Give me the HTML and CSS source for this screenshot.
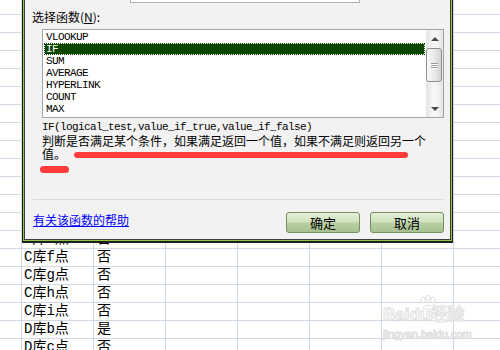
FILE: index.html
```html
<!DOCTYPE html>
<html lang="zh-CN">
  <head>
    <meta charset="UTF-8" />
    <meta name="viewport" content="width=device-width, initial-scale=1.0" />
    <title>插入函数</title>
    <link rel="stylesheet" href="styles.css">
  </head>

  <body>
    <div class="sheet">
      <div class="rows">
        <div class="row"><span class="cell name">C库e点</span><span class="cell flag">否</span></div>
        <div class="row"><span class="cell name">C库f点</span><span class="cell flag">否</span></div>
        <div class="row"><span class="cell name">C库g点</span><span class="cell flag">否</span></div>
        <div class="row"><span class="cell name">C库h点</span><span class="cell flag">否</span></div>
        <div class="row"><span class="cell name">C库i点</span><span class="cell flag">否</span></div>
        <div class="row"><span class="cell name">D库b点</span><span class="cell flag">是</span></div>
        <div class="row"><span class="cell name">D库c点</span><span class="cell flag">否</span></div>
      </div>

      <div class="watermark">
        <svg class="paw" width="20" height="16" viewBox="0 0 20 16">
          <ellipse cx="5" cy="5" rx="2.2" ry="2.8" />
          <ellipse cx="10" cy="3" rx="2.2" ry="2.8" />
          <ellipse cx="15" cy="5" rx="2.2" ry="2.8" />
          <path d="M5 14 C5 9 15 9 15 14 Z" />
        </svg>
        <div class="brand">Baidu经验</div>
        <div class="site">jingyan.baidu.com</div>
      </div>
    </div>

    <div class="dialog">
      <div class="name-box"></div>
      <label class="pick-label">选择函数(<u>N</u>):</label>

      <div class="list-box">
        <ul class="fn-list">
          <li>VLOOKUP</li>
          <li class="selected">IF</li>
          <li>SUM</li>
          <li>AVERAGE</li>
          <li>HYPERLINK</li>
          <li>COUNT</li>
          <li>MAX</li>
        </ul>
        <div class="scrollbar">
          <span class="arrow up"></span>
          <span class="thumb"><i></i><i></i><i></i></span>
          <span class="arrow down"></span>
        </div>
      </div>

      <p class="signature">IF(logical_test,value_if_true,value_if_false)</p>
      <p class="desc">判断是否满足某个条件，如果满足返回一个值，如果不满足则返回另一个值。</p>

      <!-- 红色标注 -->
      <span class="mark mark-long"></span>
      <span class="mark mark-short"></span>

      <div class="separator"></div>

      <div class="footer">
        <a href="#" class="help">有关该函数的帮助</a>
        <div class="buttons">
          <button>确定</button>
          <button>取消</button>
        </div>
      </div>
    </div>
  </body>
</html>
```

FILE: styles.css
```css
/* General Reset */
body {
  margin: 0;
  width: 500px;
  height: 350px;
  overflow: hidden;
  position: relative;
  font-family: "Noto Sans CJK SC", sans-serif;
}

/* Spreadsheet behind the dialog */
.sheet {
  position: relative;
  height: 350px;
  background-color: #fff;
  background-image: linear-gradient(to bottom, transparent 17px, #d0d7e5 17px),
    linear-gradient(to right, transparent 71px, #d0d7e5 71px);
  background-size: 100% 18px, 72px 100%;
  background-position: 0 -3px, -50px 0;
}

.rows {
  padding-top: 231px;
}

.row {
  display: grid;
  grid-template-columns: 22px 72px 72px;
  height: 18px;
  line-height: 17px;
  font-size: 14px;
  font-family: "Liberation Mono", "Noto Sans CJK SC", monospace;
  color: #000;
}

.cell.name {
  grid-column: 2;
  padding-left: 2px;
}

.cell.flag {
  padding-left: 3px;
}

/* Watermark */
.watermark {
  position: absolute;
  left: 383px;
  top: 295px;
  width: 100px;
  white-space: nowrap;
  color: #fff;
  -webkit-text-stroke: 1px #e0e0e0;
}

.paw {
  position: absolute;
  left: 35px;
  top: 0;
  fill: #fff;
  stroke: #e0e0e0;
  stroke-width: 1;
}

.brand {
  margin-top: 10px;
  font-family: "Liberation Sans", "Noto Sans CJK SC", sans-serif;
  font-size: 17px;
  font-weight: bold;
  line-height: 20px;
}

.site {
  font-family: "Liberation Sans", sans-serif;
  font-size: 11px;
  line-height: 14px;
  margin-top: 2px;
}

/* Dialog */
.dialog {
  position: absolute;
  left: 22px;
  top: -20px;
  width: 431px;
  height: 263px;
  box-sizing: border-box;
  padding: 0 8px 0 10px;
  border: 1px solid #1e1e1e;
  border-bottom-width: 2px;
  box-shadow: inset 0 0 0 1px #8dc63f, inset 0 0 0 2px #3d3d3d;
  background: #f2f2f2;
  font-size: 12px;
  color: #000;
}

.name-box {
  margin-left: 97px;
  width: 230px;
  height: 22px;
  box-sizing: border-box;
  background: #fff;
  border: 1px solid #aab2bc;
  border-top: none;
}

.pick-label {
  display: block;
  margin: 7px 0 0 -1px;
  line-height: 14px;
}

.list-box {
  display: flex;
  margin: 5px 0 0 9px;
  width: 402px;
  height: 89px;
  box-sizing: border-box;
  border: 1px solid #9ea4aa;
  background: #fff;
}

.fn-list {
  flex: 1;
  list-style: none;
  margin: 0 1px 0 0;
  padding: 1px 0 0 1px;
  font-family: "Liberation Mono", monospace;
  font-size: 11px;
  letter-spacing: -0.6px;
}

.fn-list li {
  height: 12px;
  line-height: 10px;
  box-sizing: border-box;
  padding-left: 1px;
  border: 1px solid transparent;
}

.fn-list li.selected {
  background: #0b4600 padding-box;
  border: 1px dotted #0b4600;
  color: #fff;
}

/* Scrollbar */
.scrollbar {
  width: 17px;
  display: flex;
  flex-direction: column;
  background: linear-gradient(90deg, #e4e4e4, #f6f6f6 40%, #f6f6f6 60%, #e4e4e4);
}

.arrow {
  height: 17px;
  display: flex;
  align-items: center;
  justify-content: center;
}

.arrow::before {
  content: "";
  border-left: 4px solid transparent;
  border-right: 4px solid transparent;
}

.arrow.up::before {
  border-bottom: 4px solid #4a4a4a;
}

.arrow.down {
  margin-top: auto;
}

.arrow.down::before {
  border-top: 4px solid #4a4a4a;
}

.thumb {
  margin: 1px 1px 0 0;
  height: 34px;
  box-sizing: border-box;
  border: 1px solid #8e9090;
  border-radius: 3px;
  background: linear-gradient(90deg, #fafafa, #e6e6e6 60%, #d2d2d2);
  display: flex;
  flex-direction: column;
  justify-content: center;
  align-items: center;
  gap: 1px;
}

.thumb i {
  width: 7px;
  height: 1px;
  background: #9a9a9a;
  box-shadow: 0 1px 0 #fff;
}

/* Syntax and description */
.signature {
  margin: 3px 0 0 9px;
  font-family: "Liberation Mono", monospace;
  font-size: 11px;
  letter-spacing: -0.6px;
  line-height: 13px;
}

.desc {
  margin: 0 0 0 9px;
  width: 388px;
  line-height: 13px;
  font-size: 12px;
}

.mark {
  position: absolute;
  background: #ff3b3b;
  border-radius: 4px;
}

.mark-long {
  left: 51px;
  top: 171px;
  width: 334px;
  height: 6px;
}

.mark-short {
  left: 17px;
  top: 185px;
  width: 29px;
  height: 7px;
}

.separator {
  margin-top: 39px;
  border-top: 1px solid #d5dbe2;
}

/* Footer */
.footer {
  display: flex;
  justify-content: space-between;
  align-items: flex-start;
  margin-top: 12px;
}

.help {
  margin-top: 1px;
  line-height: 14px;
  color: #0000ff;
  text-decoration: underline;
}

.buttons {
  display: flex;
  gap: 10px;
}

button {
  width: 74px;
  height: 21px;
  padding: 0;
  border: 1px solid #71905a;
  border-radius: 3px;
  background: linear-gradient(#e3efd8 0%, #d0e2be 45%, #b9cea4 55%, #a8c190 100%);
  font-family: "Noto Sans CJK SC", sans-serif;
  font-size: 13px;
  line-height: 19px;
  color: #000;
  cursor: pointer;
}
```
